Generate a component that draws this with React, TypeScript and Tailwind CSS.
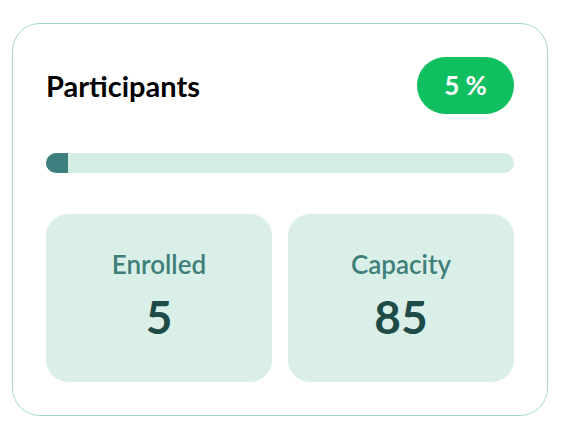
const Stat = ({ label, value }: { label: string; value: number }) => {
  return (
    <div className="flex h-[168px] flex-col items-center justify-center rounded-[22px] bg-[#d9efe8] pb-[6px]">
      <span className="text-[26px] font-semibold leading-[34px] text-[#3f7f7a]">{label}</span>
      <span className="mt-[10px] text-[46px] font-bold leading-[52px] text-[#1e4a47]">{value}</span>
    </div>
  );
};

const App = () => {
  const enrolled = 5;
  const capacity = 85;
  const pct = 5;

  return (
    <div className="flex h-[434px] w-[562px] bg-white p-[12px] pt-[23px] pb-[18px] font-['Lato',sans-serif]">
      <div className="flex w-[536px] flex-col rounded-[28px] border-[1.5px] border-[#a3d9c8] px-[33px] pt-[33px]">
        <div className="flex h-[57px] items-center justify-between">
          <h2 className="text-[29px] font-bold text-black">Participants</h2>
          <span className="flex h-[57px] w-[97px] items-center justify-center rounded-full bg-[#10bf5f] text-[26px] font-bold text-white">
            {pct} %
          </span>
        </div>
        <div className="mt-[39px] h-[20px] overflow-hidden rounded-full bg-[#d5eee5]">
          <div className="h-full bg-[#3d7f7f]" style={{ width: `${pct * 0.96}%` }} />
        </div>
        <div className="mt-[41px] grid grid-cols-2 gap-[16px]">
          <Stat label="Enrolled" value={enrolled} />
          <Stat label="Capacity" value={capacity} />
        </div>
      </div>
    </div>
  );
};

export default App;
